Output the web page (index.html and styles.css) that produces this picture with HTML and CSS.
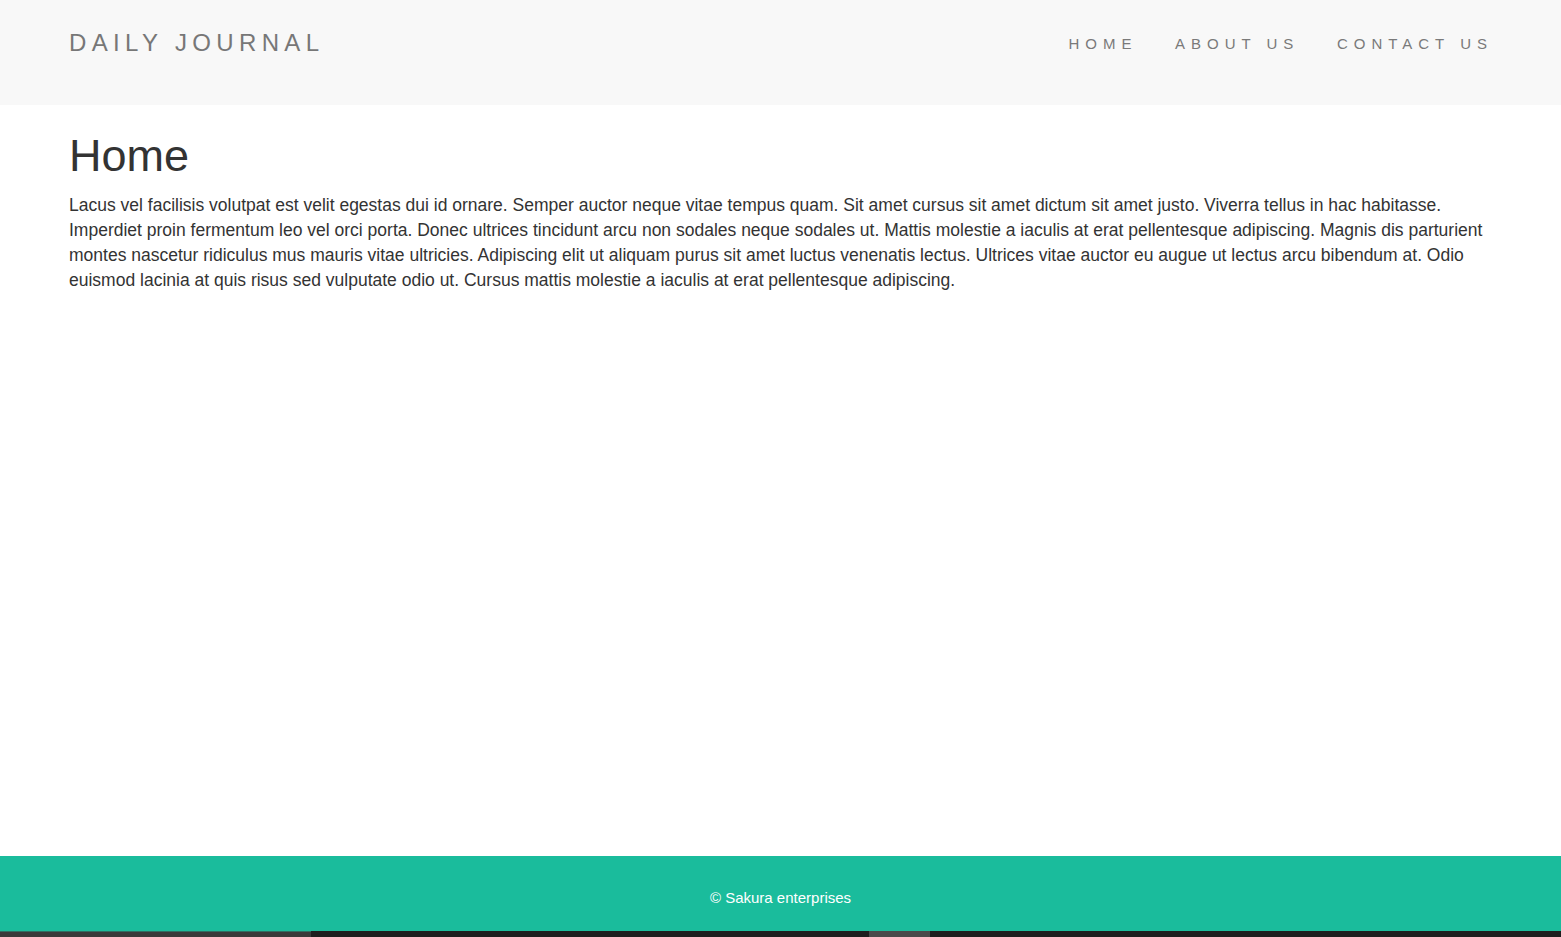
FILE: index.html
```html
<!DOCTYPE html>
<html lang="en">
<head>
<meta charset="utf-8">
<title>Daily Journal</title>
<link rel="stylesheet" href="styles.css">
</head>
<body>
<div class="page">
  <header class="navbar">
    <div class="container nav-inner">
      <a class="brand" href="#">DAILY JOURNAL</a>
      <ul class="nav-links">
        <li><a href="#">HOME</a></li>
        <li><a href="#">ABOUT US</a></li>
        <li><a href="#">CONTACT US</a></li>
      </ul>
    </div>
  </header>
  <main class="container content">
    <h1>Home</h1>
    <p>Lacus vel facilisis volutpat est velit egestas dui id ornare. Semper auctor neque vitae tempus quam. Sit amet cursus sit amet dictum sit amet justo. Viverra tellus in hac habitasse. Imperdiet proin fermentum leo vel orci porta. Donec ultrices tincidunt arcu non sodales neque sodales ut. Mattis molestie a iaculis at erat pellentesque adipiscing. Magnis dis parturient montes nascetur ridiculus mus mauris vitae ultricies. Adipiscing elit ut aliquam purus sit amet luctus venenatis lectus. Ultrices vitae auctor eu augue ut lectus arcu bibendum at. Odio euismod lacinia at quis risus sed vulputate odio ut. Cursus mattis molestie a iaculis at erat pellentesque adipiscing.</p>
  </main>
  <footer class="footer">
    <p>© Sakura enterprises</p>
  </footer>
  <div class="strip">
    <span class="seg seg-a"></span>
    <span class="seg seg-b"></span>
    <span class="seg seg-c"></span>
    <span class="seg seg-d"></span>
  </div>
</div>
</body>
</html>
```
FILE: styles.css
```css
* { box-sizing: border-box; }

html, body {
  margin: 0;
  padding: 0;
}

body {
  font-family: "Liberation Sans", Arial, sans-serif;
  font-size: 17.5px;
  line-height: 25px;
  color: #333333;
  background: #ffffff;
}

.page {
  min-height: 100vh;
  display: flex;
  flex-direction: column;
}

.container {
  width: 1462.5px;
  margin: 0 auto;
  padding: 0 18.75px 0 19.75px;
}

.navbar {
  background: #f8f8f8;
  height: 105px;
  flex: none;
}

.nav-inner {
  display: flex;
  justify-content: space-between;
  align-items: flex-start;
}

.brand {
  display: block;
  margin-top: 28px;
  font-size: 24px;
  line-height: 30px;
  letter-spacing: 5.35px;
  color: #777777;
  text-decoration: none;
}

.nav-links {
  list-style: none;
  margin: 34px -18.75px 0 0;
  padding: 0;
  display: flex;
}

.nav-links a {
  display: block;
  padding: 0 18.75px;
  font-size: 15px;
  line-height: 20px;
  letter-spacing: 6px;
  color: #7a7a7a;
  text-decoration: none;
}

.content {
  flex: 1;
}

.content h1 {
  margin: 26px 0 12.5px;
  font-size: 45px;
  line-height: 1.1;
  font-weight: 500;
  color: #333333;
}

.content p {
  margin: 0 0 12.5px;
}

.footer {
  flex: none;
  height: 75px;
  background: #1abc9c;
  color: #ffffff;
  text-align: center;
  padding-top: 31px;
}

.footer p {
  margin: 0;
  font-size: 15px;
  line-height: 21px;
}

.strip {
  flex: none;
  height: 6px;
  display: flex;
  background: #1e1e1e;
}

.seg {
  display: block;
  height: 100%;
}

.seg-a { width: 311px; background: #3a3a3a; border-top: 1px solid #2f6f62; }
.seg-b { width: 558px; background: #1e1e1e; }
.seg-c { width: 61px; background: #4a4a4a; }
.seg-d { flex: 1; background: #1e1e1e; }
```
